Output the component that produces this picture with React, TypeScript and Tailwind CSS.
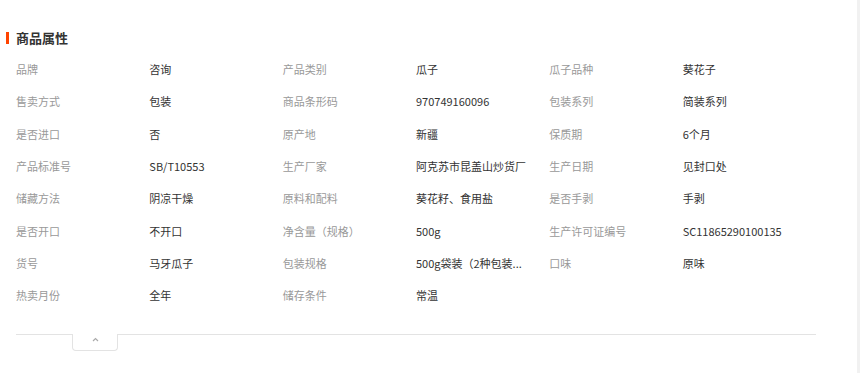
const rows: [string, string][][] = [
  [["品牌", "咨询"], ["产品类别", "瓜子"], ["瓜子品种", "葵花子"]],
  [["售卖方式", "包装"], ["商品条形码", "970749160096"], ["包装系列", "简装系列"]],
  [["是否进口", "否"], ["原产地", "新疆"], ["保质期", "6个月"]],
  [["产品标准号", "SB/T10553"], ["生产厂家", "阿克苏市昆盖山炒货厂"], ["生产日期", "见封口处"]],
  [["储藏方法", "阴凉干燥"], ["原料和配料", "葵花籽、食用盐"], ["是否手剥", "手剥"]],
  [["是否开口", "不开口"], ["净含量（规格）", "500g"], ["生产许可证编号", "SC11865290100135"]],
  [["货号", "马牙瓜子"], ["包装规格", "500g袋装（2种包装..."], ["口味", "原味"]],
  [["热卖月份", "全年"], ["储存条件", "常温"]],
];

export default function App() {
  return (
    <div
      className="flex min-h-[373px] bg-white"
      style={{ fontFamily: '"Noto Sans CJK SC", "Liberation Sans", sans-serif' }}
    >
      <div className="flex-1 pt-[29px]">
        {/* title */}
        <div className="flex h-[18px] items-center pl-[6px]">
          <span className="h-[12px] w-[3px] bg-[#ff4400]" />
          <h2 className="ml-[7px] text-[13px] leading-[18px] font-bold text-[#333]">商品属性</h2>
        </div>

        {/* attributes */}
        <div className="mx-[16px] mt-[6px] w-[800px]">
          {rows.map((row, i) => (
            <div key={i} className="grid h-[32.3px] grid-cols-6 items-center text-[11px] leading-[16px]">
              {row.map(([label, value]) => (
                <div key={label} className="contents">
                  <div className="text-[#999]">{label}</div>
                  <div className="w-[112px] whitespace-nowrap text-[#333]">{value}</div>
                </div>
              ))}
            </div>
          ))}
        </div>

        {/* divider with collapse tab */}
        <div className="mx-[16px] mt-[23px] w-[800px] border-t border-[#e3e3e3]" />
        <div className="relative -mt-px ml-[72px] flex h-[17px] w-[46px] justify-center rounded-b-[4px] border-x border-b border-[#e3e3e3] bg-white pt-[3px]">
          <svg width="7" height="5" viewBox="0 0 7 5" fill="none">
            <polyline points="1,4 3.5,1.5 6,4" stroke="#aaa" strokeWidth="1.2" />
          </svg>
        </div>
      </div>
      <div className="w-[3px] bg-[#f1f1f1]" />
    </div>
  );
}
